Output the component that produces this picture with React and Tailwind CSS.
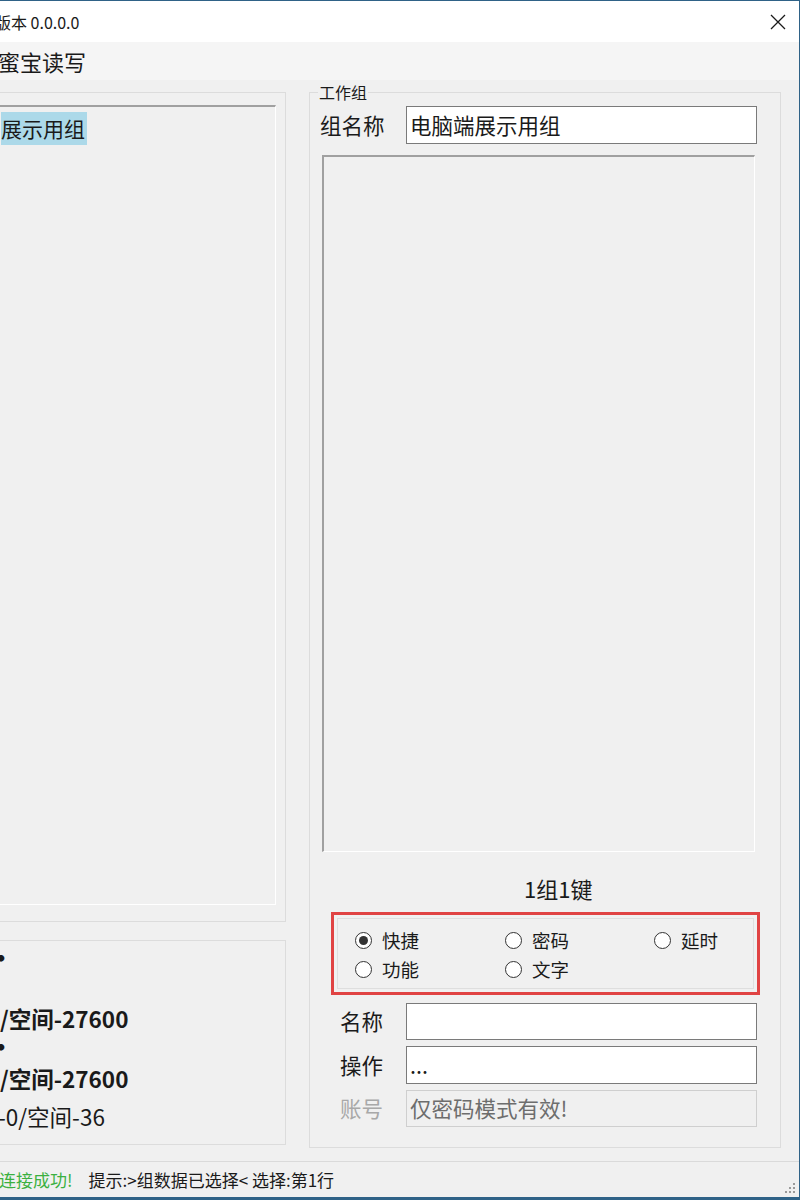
import { useState } from 'react'

const font = "font-['Microsoft_YaHei','Noto_Sans_CJK_SC',sans-serif]"

const Radio = ({ checked, label }) => (
  <label className="flex h-[29px] items-center gap-[10px]">
    <span className="flex h-[17px] w-[17px] items-center justify-center rounded-full border border-[#333333] bg-white">
      {checked && <span className="h-[9px] w-[9px] rounded-full bg-[#333333]" />}
    </span>
    <span className="text-[18.5px] leading-none text-[#1a1a1a]">{label}</span>
  </label>
)

const Field = ({ label, value, disabled, h = 'h-[38px]', labelPad = 'pl-[30px]' }) => (
  <div className="flex items-center">
    <div className={`w-[96px] ${labelPad} text-[21.5px] ${disabled ? 'text-[#a8a8a8]' : 'text-[#1a1a1a]'}`}>
      {label}
    </div>
    <div
      className={`flex w-[351px] ${h} items-center px-[3px] text-[21.5px] ${
        disabled
          ? 'border border-[#cfcfcf] bg-[#f0f0f0] text-[#6d6d6d]'
          : 'border border-[#7a7a7a] bg-white text-[#1a1a1a]'
      }`}
    >
      {value}
    </div>
  </div>
)

export default function App() {
  const [mode] = useState('快捷')

  return (
    <div className={`flex h-[1200px] w-[800px] flex-col overflow-hidden border-t border-r border-b-[3px] border-[#2f6287] bg-[#f0f0f0] ${font}`}>
      {/* Title bar */}
      <div className="flex h-[41px] shrink-0 items-center justify-between bg-white">
        <span className="-ml-[5px] text-[16px] text-[#1a1a1a]">版本 0.0.0.0</span>
        <svg width="16" height="16" viewBox="0 0 16 16" className="mr-[13px]">
          <path d="M1 1 L15 15 M15 1 L1 15" stroke="#1a1a1a" strokeWidth="1.3" />
        </svg>
      </div>

      {/* Menu bar */}
      <div className="flex h-[38px] shrink-0 items-center bg-[#f5f5f5]">
        <span className="-ml-[2px] text-[22px] text-[#1a1a1a]">蜜宝读写</span>
      </div>

      {/* Body */}
      <div className="flex flex-1 pt-[12px]">
        {/* Left column */}
        <div className="-ml-[20px] flex w-[306px] flex-col">
          <div className="h-[830px] border border-[#dcdcdc] pt-[12px] pr-[9px] pb-[16px]">
            <div className="h-full border-t-2 border-l-2 border-r border-b border-t-[#a0a0a0] border-l-[#a0a0a0] border-r-white border-b-white pt-[5px]">
              <div className="ml-[18px] w-fit bg-[#acd9e9] pr-[2px] text-[21px] leading-[33px] text-[#1a1a1a]">
                展示用组
              </div>
            </div>
          </div>
          <div className="mt-[18px] h-[205px] border border-[#dcdcdc] pl-[20px] text-[22.5px] text-[#1a1a1a]">
            <div className="mt-[2px] -ml-[13px] h-[28px] text-[26px] font-bold leading-[28px]">•</div>
            <div className="mt-[33px] -ml-[1px] h-[28px] font-bold leading-[28px]">/空间-27600</div>
            <div className="-ml-[13px] h-[28px] text-[26px] font-bold leading-[28px]">•</div>
            <div className="mt-[4px] -ml-[1px] h-[28px] font-bold leading-[28px]">/空间-27600</div>
            <div className="mt-[10px] -ml-[3px] h-[28px] leading-[28px]">-0/空间-36</div>
          </div>
        </div>

        {/* Work group */}
        <div className="ml-[23px] flex h-[1056px] w-[472px] flex-col border border-[#dcdcdc]">
          <div className="-mt-[10px] ml-[8px] w-fit bg-[#f0f0f0] px-[1px] text-[16px] leading-[18px] text-[#1a1a1a]">
            工作组
          </div>

          <div className="mt-[5px]">
            <Field label="组名称" value="电脑端展示用组" labelPad="pl-[10px]" />
          </div>

          <div className="mt-[11px] ml-[12px] h-[697px] w-[433px] border-t-2 border-l-2 border-r border-b border-t-[#a0a0a0] border-l-[#a0a0a0] border-r-white border-b-white" />

          <div className="mt-[21px] ml-[214px] h-[30px] text-[22px] leading-[30px] text-[#1a1a1a]">1组1键</div>

          <div className="mt-[9px] ml-[21px] h-[83px] w-[429px] border-[3px] border-[#e04343]">
            <div className="m-[3px] h-[71px] border border-[#dedede] pt-[7px] pl-[17px]">
              <div className="grid grid-cols-[150px_149px_100px]">
                {['快捷', '密码', '延时', '功能', '文字'].map((item) => (
                  <Radio key={item} label={item} checked={item === mode} />
                ))}
              </div>
            </div>
          </div>

          <div className="mt-[8px] flex flex-col gap-[6px]">
            <Field label="名称" value="" h="h-[37px]" />
            <Field label="操作" value="..." />
            <Field label="账号" value="仅密码模式有效!" disabled h="h-[37px]" />
          </div>
        </div>
      </div>

      {/* Status bar */}
      <div className="flex h-[36px] shrink-0 items-center justify-between border-t border-[#dadada] text-[17px]">
        <div className="flex items-center">
          <span className="-ml-[1px] text-[#3bb040]">连接成功!</span>
          <span className="ml-[16px] text-[#1a1a1a]">提示:&gt;组数据已选择&lt; 选择:第1行</span>
        </div>
        <svg width="12" height="12" viewBox="0 0 12 12" className="mr-[3px] mt-[16px]">
          <g fill="#9a9a9a">
            <rect x="9" y="1" width="2" height="2" />
            <rect x="5" y="5" width="2" height="2" />
            <rect x="9" y="5" width="2" height="2" />
            <rect x="1" y="9" width="2" height="2" />
            <rect x="5" y="9" width="2" height="2" />
            <rect x="9" y="9" width="2" height="2" />
          </g>
        </svg>
      </div>
    </div>
  )
}
